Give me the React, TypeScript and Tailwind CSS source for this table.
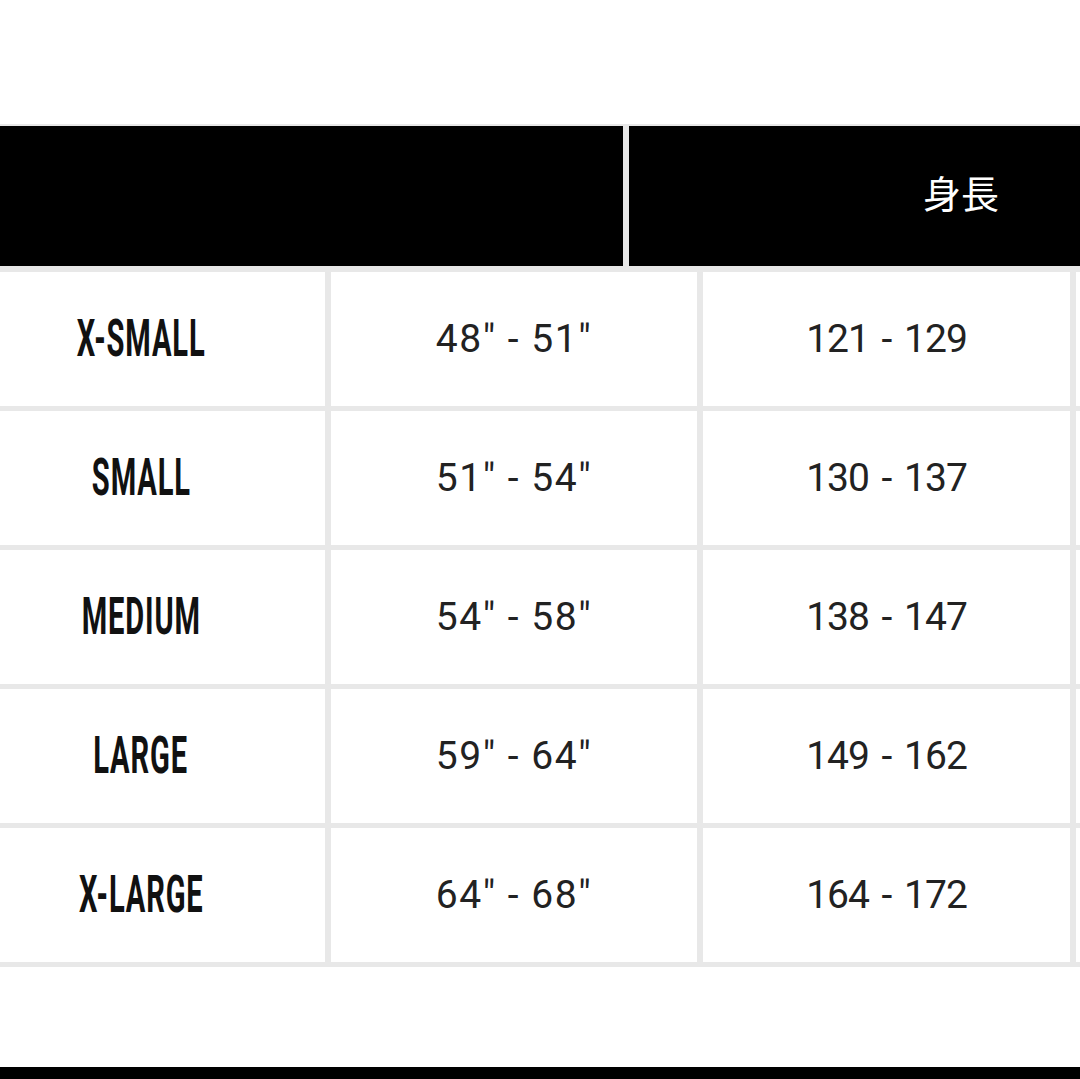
const rows = [
  { size: 'X-SMALL', inches: '48" - 51"', cm: '121 - 129' },
  { size: 'SMALL', inches: '51" - 54"', cm: '130 - 137' },
  { size: 'MEDIUM', inches: '54" - 58"', cm: '138 - 147' },
  { size: 'LARGE', inches: '59" - 64"', cm: '149 - 162' },
  { size: 'X-LARGE', inches: '64" - 68"', cm: '164 - 172' },
]

export default function App() {
  return (
    <div className="w-[1080px] h-[1079px] overflow-hidden bg-white flex flex-col font-['Roboto',sans-serif]">
      <div className="h-[124px] shrink-0" />

      {/* size table, cropped on the left and right */}
      <div className="-ml-[43px] w-[1400px] shrink-0 flex flex-col bg-[#e8e8e8] pt-[2px] pb-[5px]">
        <div className="grid grid-cols-[666px_1fr] gap-[6px] h-[140px]">
          <div className="bg-black" />
          <div className="bg-black flex items-center pb-[8px]">
            <span className="w-[664px] text-center text-white text-[38px] font-['Noto_Sans_CJK_JP','Noto_Sans',sans-serif] leading-none">
              身長
            </span>
          </div>
        </div>

        <div className="flex flex-col gap-[5px] mt-[6px]">
          {rows.map((r) => (
            <div key={r.size} className="grid grid-cols-[368px_366px_367px_1fr] gap-[6px] h-[134px]">
              <div className="bg-white flex items-center justify-center">
                <span className="inline-block scale-x-[0.56] text-[52px] font-bold text-[#111] leading-none tracking-[1.5px]">
                  {r.size}
                </span>
              </div>
              <div className="bg-white flex items-center justify-center">
                <span className="text-[39px] text-[#222] leading-none tracking-[1.5px]">{r.inches}</span>
              </div>
              <div className="bg-white flex items-center justify-center">
                <span className="text-[39px] text-[#222] leading-none tracking-[-1px] [word-spacing:4px]">{r.cm}</span>
              </div>
              <div className="bg-white" />
            </div>
          ))}
        </div>
      </div>

      <div className="flex-1" />
      <div className="h-[12px] shrink-0 bg-black" />
    </div>
  )
}
